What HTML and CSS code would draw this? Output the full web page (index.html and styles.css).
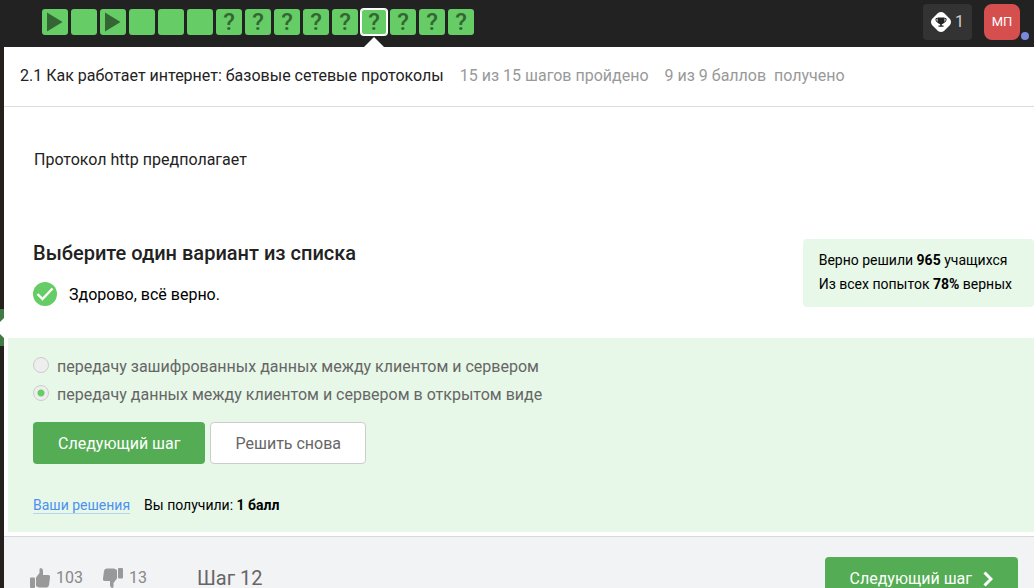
FILE: index.html
```html
<!DOCTYPE html>
<html lang="ru">
<head>
<meta charset="utf-8">
<meta name="viewport" content="width=device-width, initial-scale=1">
<title>2.1 Как работает интернет: базовые сетевые протоколы</title>
<link rel="stylesheet" href="styles.css">
</head>
<body class="page">
<header class="topbar">
  <nav class="steps" aria-label="Шаги урока">
    <a class="step" href="#1" aria-label="Шаг 1"><svg class="step-play" viewBox="0 0 26 26"><path d="M5 3.500 20.500 13 5 22.500z"/></svg></a>
    <a class="step" href="#2" aria-label="Шаг 2"></a>
    <a class="step" href="#3" aria-label="Шаг 3"><svg class="step-play" viewBox="0 0 26 26"><path d="M5 3.500 20.500 13 5 22.500z"/></svg></a>
    <a class="step" href="#4" aria-label="Шаг 4"></a>
    <a class="step" href="#5" aria-label="Шаг 5"></a>
    <a class="step" href="#6" aria-label="Шаг 6"></a>
    <a class="step" href="#7">?</a>
    <a class="step" href="#8">?</a>
    <a class="step" href="#9">?</a>
    <a class="step" href="#10">?</a>
    <a class="step" href="#11">?</a>
    <a class="step step-current" href="#12" aria-current="step">?</a>
    <a class="step" href="#13">?</a>
    <a class="step" href="#14">?</a>
    <a class="step" href="#15">?</a>
  </nav>
  <button class="score" type="button">
    <svg class="score-icon" viewBox="0 0 20 20" aria-hidden="true">
      <path fill="#fff" d="M7 1Q10-1 13 1L19 7Q21 10 19 13L13 19Q10 21 7 19L1 13Q-1 10 1 7z"/>
      <path fill="#222" d="M6.500 5.500h7V9q0 2.700-2.700 3.200v1.300h1.700v1.300h-5v-1.300h1.700v-1.300Q6.500 11.700 6.500 9z"/>
      <path fill="none" stroke="#222" d="M6.500 6.500H5V8q0 2 2 2.300M13.500 6.500H15V8q0 2-2 2.300"/>
    </svg>
    <span>1</span>
  </button>
  <button class="avatar" type="button">МП<span class="avatar-dot"></span></button>
</header>
<div class="shell">
  <aside class="rail">
    <svg class="rail-marker" viewBox="0 0 4 37" aria-hidden="true"><path fill="#417b43" d="M0 0h4v37H0z"/><path fill="#fff" d="M4 9v20L0 25V13z"/></svg>
  </aside>
  <main class="lesson">
    <div class="lesson-head">
      <h1 class="lesson-title">2.1 Как работает интернет: базовые сетевые протоколы</h1>
      <span class="progress">15 из 15 шагов пройдено</span>
      <span class="progress">9 из 9 баллов&nbsp; получено</span>
    </div>
    <p class="question">Протокол http предполагает</p>
    <section class="task-head">
      <div class="task-status">
        <h2 class="task-title">Выберите один вариант из списка</h2>
        <p class="verdict">
          <svg class="verdict-icon" viewBox="0 0 24 24" aria-hidden="true"><circle cx="12" cy="12" r="12" fill="#66cc66"/><path d="m4.500 12 5 5L19.500 6.500" fill="none" stroke="#fff" stroke-width="2.400"/></svg>
          Здорово, всё верно.
        </p>
      </div>
      <div class="stats">
        <div>Верно решили <b>965</b> учащихся</div>
        <div>Из всех попыток <b>78%</b> верных</div>
      </div>
    </section>
    <form class="answers">
      <label class="option"><input class="radio" type="radio" name="answer">передачу зашифрованных данных между клиентом и сервером</label>
      <label class="option"><input class="radio" type="radio" name="answer" checked>передачу данных между клиентом и сервером в открытом виде</label>
      <div class="actions">
        <button class="button button-primary" type="button">Следующий шаг</button>
        <button class="button button-plain" type="button">Решить снова</button>
      </div>
      <div class="result">
        <a class="solutions" href="#solutions">Ваши решения</a>
        <span>Вы получили: <b>1 балл</b></span>
      </div>
    </form>
    <footer class="step-footer">
      <button class="vote" type="button" aria-label="Нравится: 103">
        <svg class="vote-icon" viewBox="0 0 20 20"><rect y="9.500" width="5" height="10.500" rx="1"/><path d="M6 9.500 9.500 5V1.500Q9.500 0 11 0 13 .5 13 3V7h5q2.500 0 2 2.500L19 17q-.5 2.500-2.500 2.500H9L6 18z"/></svg>
        <span>103</span>
      </button>
      <button class="vote" type="button" aria-label="Не нравится: 13">
        <svg class="vote-icon vote-down" viewBox="0 0 20 20"><rect y="9.500" width="5" height="10.500" rx="1"/><path d="M6 9.500 9.500 5V1.500Q9.500 0 11 0 13 .5 13 3V7h5q2.500 0 2 2.500L19 17q-.5 2.500-2.500 2.500H9L6 18z"/></svg>
        <span>13</span>
      </button>
      <span class="step-number">Шаг 12</span>
      <button class="button button-primary button-next" type="button">Следующий шаг
        <svg class="chevron" viewBox="0 0 10 16" aria-hidden="true"><path d="m1.500 1.500 6.500 6.500-6.500 6.500" fill="none" stroke="#fff" stroke-width="3"/></svg>
      </button>
    </footer>
  </main>
</div>
</body>
</html>
```
FILE: styles.css
```css
* { box-sizing: border-box; }
.page {
  margin: 0;
  height: 100vh;
  overflow: hidden;
  display: flex;
  flex-direction: column;
  font: 16px/24px Roboto, "Noto Sans", sans-serif;
  color: #222;
  background: #fff;
}
button { font: inherit; border: 0; cursor: pointer; }
.topbar {
  flex: none;
  height: 47px;
  display: flex;
  align-items: flex-start;
  padding: 4px 14px 0 42px;
  background: #222;
}
.steps { display: flex; gap: 3px; padding-top: 5px; margin-right: auto; }
.step {
  position: relative;
  width: 26px;
  height: 26px;
  border-radius: 3px;
  background: #66cc66;
  color: #336633;
  font-size: 24px;
  font-weight: 500;
  line-height: 27px;
  text-align: center;
  text-decoration: none;
}
.step-play { display: block; width: 26px; height: 26px; fill: #336633; }
.step-current { box-shadow: 0 0 0 1px #fff, inset 0 0 0 1px #fff; }
.step-current::after {
  content: "";
  position: absolute;
  left: 3px;
  top: 28px;
  border: 10px solid transparent;
  border-top: 0;
  border-bottom-color: #fff;
}
.score {
  display: flex;
  align-items: center;
  gap: 4px;
  height: 36px;
  padding: 0 8px;
  margin-right: 12px;
  border-radius: 4px;
  background: #333;
  color: #ccc;
}
.score-icon { width: 20px; height: 20px; }
.avatar {
  position: relative;
  width: 36px;
  height: 36px;
  padding: 0;
  border-radius: 8px;
  background: #d64f4f;
  color: #fff;
  font-size: 13px;
}
.avatar-dot {
  position: absolute;
  right: -9px;
  bottom: 0;
  width: 8px;
  height: 8px;
  border-radius: 50%;
  background: #7b88df;
}
.shell { flex: 1 0 auto; display: flex; }
.rail { flex: none; width: 4px; padding-top: 262px; background: #23201d; }
.rail-marker { display: block; width: 4px; height: 37px; }
.lesson { flex: 1; min-width: 0; display: flex; flex-direction: column; }
.lesson-head {
  display: flex;
  gap: 16px;
  padding: 17px 16px 18px;
  border-bottom: 1px solid #ddd;
}
.lesson-title { margin: 0; font-size: 16px; font-weight: 400; }
.progress { color: #999; }
.question { margin: 41px 30px 67px; }
.task-head { display: flex; justify-content: space-between; padding-left: 29px; }
.task-title { margin: 0 0 16px; font-size: 20px; line-height: 28px; font-weight: 500; }
.verdict { display: flex; gap: 12px; margin: 0 0 31px; color: #000; }
.verdict-icon { width: 24px; height: 24px; margin-top: -1px; }
.stats {
  align-self: flex-start;
  padding: 9px 22px 11px 16px;
  border-radius: 4px;
  background: #e7f8e8;
  color: #000;
  font-size: 14px;
}
.answers {
  margin-left: 4px;
  padding: 15px 25px 14px;
  background: #e7f8e8;
  color: #666;
}
.option { display: flex; gap: 8px; height: 28px; padding-top: 2px; }
.radio {
  appearance: none;
  width: 16px;
  height: 16px;
  margin: 2px 0 0;
  border: 1px solid #ccc;
  border-radius: 50%;
  background: #eee;
}
.radio:checked { background: radial-gradient(circle, #66cc66 3px, #eee 4px); }
.actions { display: flex; gap: 5px; margin: 13px 0 29px; }
.button { height: 42px; padding: 1px 25px 0; border-radius: 4px; }
.button-primary { background: #54ad54; color: #fff; }
.button-plain { padding: 1px 24px 0; border: 1px solid #ccc; background: #fff; color: #666; }
.result { display: flex; gap: 14px; color: #000; font-size: 14px; }
.solutions {
  line-height: 16px;
  margin: 4px 0;
  color: #4d90f0;
  text-decoration: none;
  border-bottom: 1px solid #b5d5ee;
}
.step-footer {
  display: flex;
  align-items: center;
  flex: 1;
  margin-top: 4px;
  padding: 20px 16px 12px 26px;
  border-top: 1px solid #d8d8d8;
  background: #f2f3f5;
}
.vote {
  display: flex;
  align-items: center;
  gap: 6px;
  margin-right: 20px;
  padding: 0;
  background: none;
  color: #888;
}
.vote-icon { width: 20px; height: 20px; fill: #999; }
.vote-down { transform: rotate(180deg); }
.step-number { margin: 0 auto 0 30px; font-size: 20px; color: #666; }
.button-next { display: flex; align-items: center; gap: 11px; }
.chevron { width: 10px; height: 16px; }
```
